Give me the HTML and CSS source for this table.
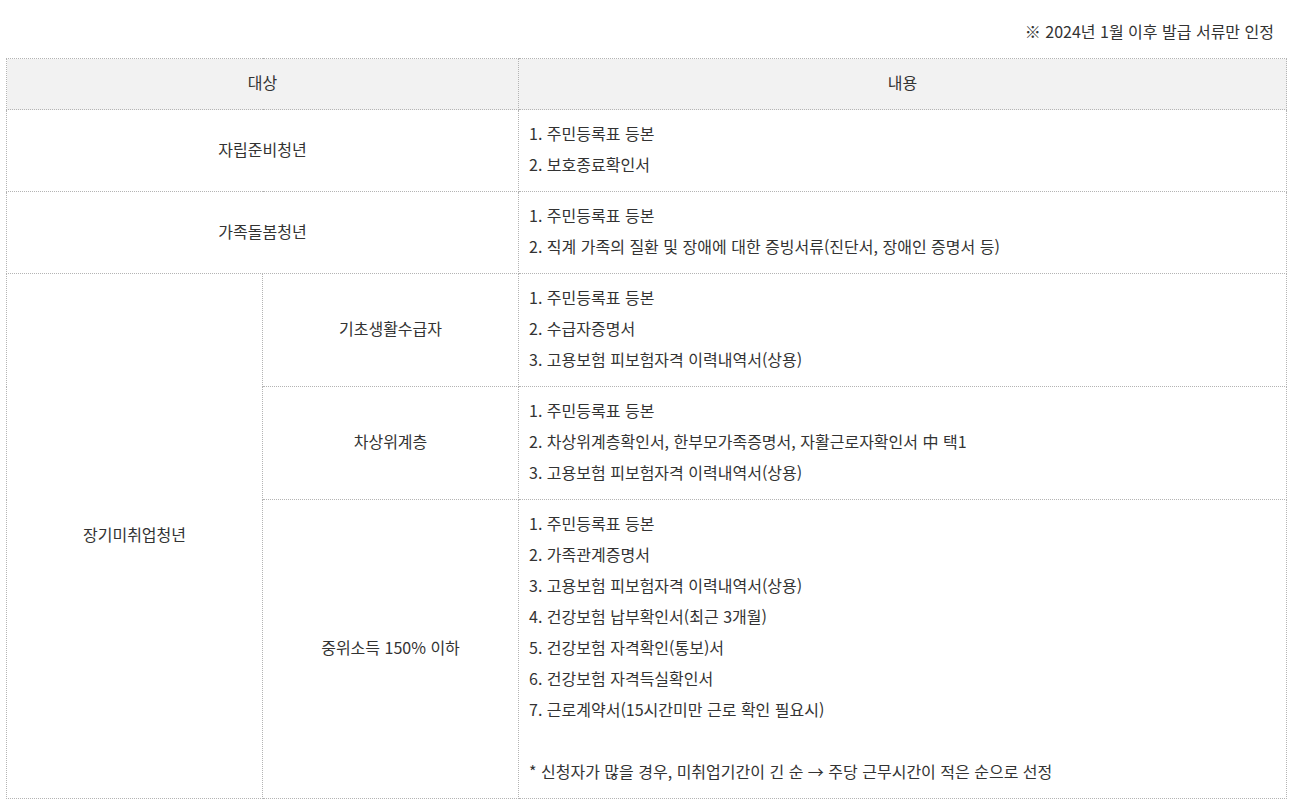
FILE: index.html
```html
<!DOCTYPE html>
<html lang="ko">
<head>
<meta charset="utf-8">
<title>서류 안내</title>
<link rel="stylesheet" href="styles.css">
</head>
<body>
<div class="wrap">
  <p class="note">※ 2024년 1월 이후 발급 서류만 인정</p>
  <table class="doc-table">
    <colgroup>
      <col class="c1"><col class="c2"><col class="c3">
    </colgroup>
    <thead>
      <tr><th colspan="2">대상</th><th>내용</th></tr>
    </thead>
    <tbody>
      <tr>
        <td colspan="2" class="center">자립준비청년</td>
        <td class="list">1. 주민등록표 등본<br>2. 보호종료확인서</td>
      </tr>
      <tr>
        <td colspan="2" class="center">가족돌봄청년</td>
        <td class="list">1. 주민등록표 등본<br>2. 직계 가족의 질환 및 장애에 대한 증빙서류(진단서, 장애인 증명서 등)</td>
      </tr>
      <tr>
        <td rowspan="3" class="center">장기미취업청년</td>
        <td class="center">기초생활수급자</td>
        <td class="list">1. 주민등록표 등본<br>2. 수급자증명서<br>3. 고용보험 피보험자격 이력내역서(상용)</td>
      </tr>
      <tr>
        <td class="center">차상위계층</td>
        <td class="list">1. 주민등록표 등본<br>2. 차상위계층확인서, 한부모가족증명서, 자활근로자확인서 中 택1<br>3. 고용보험 피보험자격 이력내역서(상용)</td>
      </tr>
      <tr>
        <td class="center">중위소득 150% 이하</td>
        <td class="list">1. 주민등록표 등본<br>2. 가족관계증명서<br>3. 고용보험 피보험자격 이력내역서(상용)<br>4. 건강보험 납부확인서(최근 3개월)<br>5. 건강보험 자격확인(통보)서<br>6. 건강보험 자격득실확인서<br>7. 근로계약서(15시간미만 근로 확인 필요시)<br><br>* 신청자가 많을 경우, 미취업기간이 긴 순 → 주당 근무시간이 적은 순으로 선정</td>
      </tr>
    </tbody>
  </table>
</div>
</body>
</html>
```

FILE: styles.css
```css
html, body {
  margin: 0;
  padding: 0;
  background: #fff;
}
body {
  font-family: "Noto Sans CJK KR", "Noto Sans", sans-serif;
  color: #333;
}
.wrap {
  padding: 0 6px;
}
.note {
  margin: 0;
  padding: 21px 12px 17px 0;
  text-align: right;
  font-size: 16px;
  line-height: 20px;
  color: #333;
}
.doc-table {
  width: 1280px;
  border-collapse: collapse;
  table-layout: fixed;
  font-size: 16px;
  line-height: 31px;
}
.c1, .c2 { width: 256px; }
.c3 { width: 768px; }
.doc-table th,
.doc-table td {
  border: 1px dotted #b4b4b4;
  padding: 8px 10px 11px;
  vertical-align: middle;
}
.doc-table th {
  background: #f2f2f2;
  font-weight: 400;
  text-align: center;
  color: #333;
}
.center { text-align: center; }
.list { text-align: left; }
```
